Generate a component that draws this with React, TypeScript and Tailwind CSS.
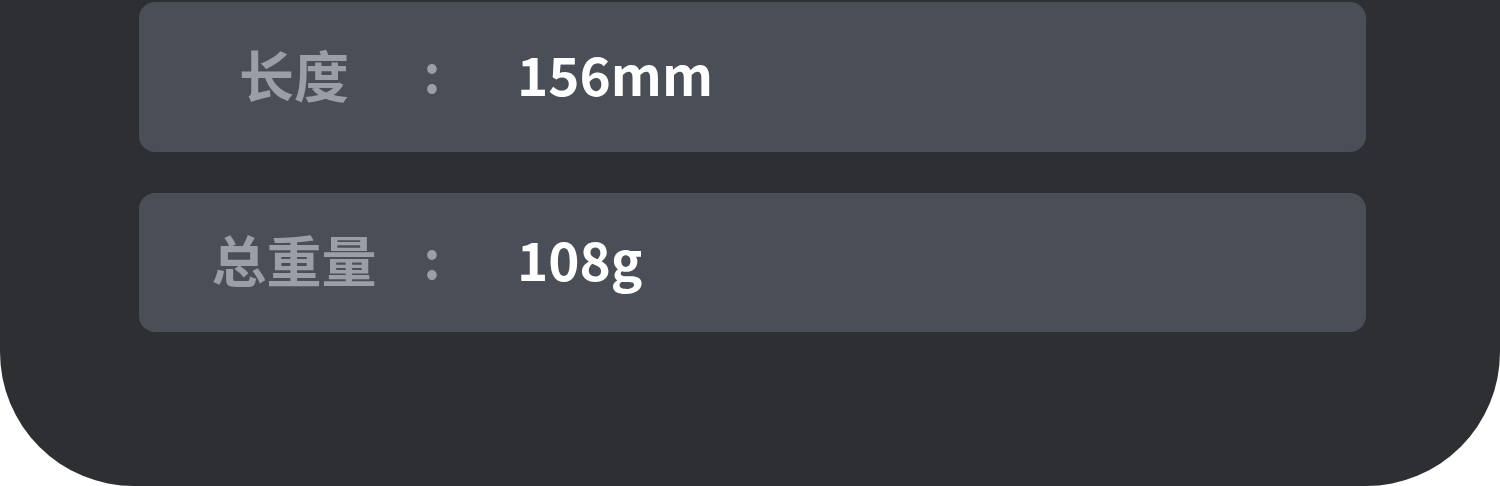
export default function App() {
  const rows = [
    { label: '长度', value: '156mm', h: 'h-[150px]' },
    { label: '总重量', value: '108g', h: 'h-[139px]' },
  ]

  return (
    <div className="w-[1500px] h-[486px] bg-white overflow-hidden">
      <div className="h-[486px] bg-[#2e2f33] rounded-b-[134px] pl-[139px] pr-[134px] pt-[2px] flex flex-col gap-[41px] font-['Noto_Sans_CJK_SC',sans-serif]">
        {rows.map(r => (
          <div key={r.label} className={`${r.h} bg-[#4a4e57] rounded-[16px] flex items-center pb-[8px]`}>
            <span className="ml-[30px] w-[250px] text-center text-[55px] font-bold text-[#9a9ea6] leading-none">
              {r.label}
            </span>
            <span className="w-[26px] text-center text-[52px] font-bold text-[#9a9ea6] leading-none -translate-y-[2px]">:</span>
            <span className="ml-[72px] text-[53px] font-bold text-white leading-none">{r.value}</span>
          </div>
        ))}
      </div>
    </div>
  )
}
